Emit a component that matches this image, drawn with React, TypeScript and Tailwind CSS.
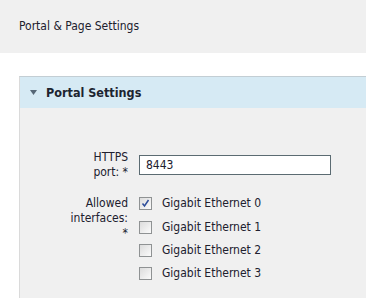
import { useState } from 'react'

const font = "font-['DejaVu_Sans_Condensed','DejaVu_Sans',sans-serif] [font-stretch:condensed]"

function Checkbox({ checked }: { checked: boolean }) {
  return (
    <span className="flex h-[13px] w-[13px] shrink-0 items-center justify-center border border-[#8f9293] bg-gradient-to-br from-[#dcdcdc] to-[#fbfbfb]">
      {checked && (
        <svg width="9" height="9" viewBox="0 0 9 9">
          <path d="M1.5 4.5 L3.5 7 L7.5 1" fill="none" stroke="#2d4d9a" strokeWidth="1.5" />
        </svg>
      )}
    </span>
  )
}

export default function App() {
  const [port, setPort] = useState('8443')
  const interfaces = [
    { name: 'Gigabit Ethernet 0', checked: true },
    { name: 'Gigabit Ethernet 1', checked: false },
    { name: 'Gigabit Ethernet 2', checked: false },
    { name: 'Gigabit Ethernet 3', checked: false },
  ]

  return (
    <div className={`${font} h-[298px] w-[366px] overflow-hidden bg-white text-[12px] leading-[15px] text-[#20202e]`}>
      <div className="flex h-[53px] items-center bg-[#f0f0f0] pl-[19px]">
        Portal &amp; Page Settings
      </div>

      <div className="ml-[19px] mt-[23px] border-l border-t border-l-[#dadada] border-t-[#c3ced4]">
        <div className="flex h-[31px] items-center gap-[9px] bg-[#d6eaf4] pl-[10px]">
          <svg width="7" height="5" viewBox="0 0 7 5">
            <path d="M0 0 H7 L3.5 5 Z" fill="#566776" />
          </svg>
          <span className="text-[12.5px] font-bold text-[#1c2430]">Portal Settings</span>
        </div>

        <div className="flex flex-col bg-[#f0f0f0] pb-[12px] pt-[42px]">
          <div className="flex items-center gap-[11px]">
            <div className="w-[108px] text-right">
              HTTPS
              <br />
              port: *
            </div>
            <input
              value={port}
              onChange={(e) => setPort(e.target.value)}
              className="h-[20px] w-[192px] border border-[#5b6b72] bg-white pl-[6px] outline-none"
            />
          </div>

          <div className="mt-[12px] flex items-start gap-[11px]">
            <div className="w-[108px] pt-[4px] text-right">
              Allowed
              <br />
              interfaces:
              <br />*
            </div>
            <div className="flex flex-col">
              {interfaces.map((item) => (
                <label key={item.name} className="flex h-[23.4px] items-center gap-[10px]">
                  <Checkbox checked={item.checked} />
                  <span>{item.name}</span>
                </label>
              ))}
            </div>
          </div>
        </div>
      </div>
    </div>
  )
}
